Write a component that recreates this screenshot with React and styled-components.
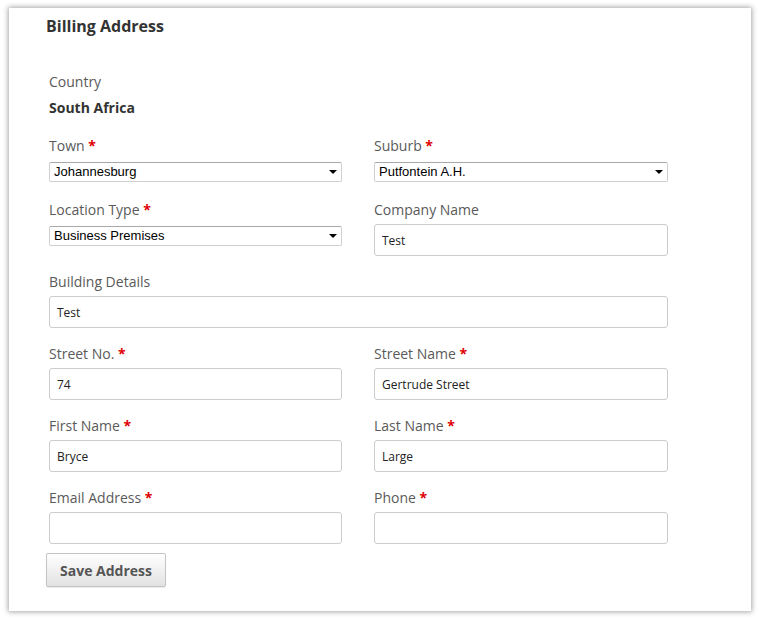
import React from 'react'
import styled, { createGlobalStyle } from 'styled-components'

const GlobalStyle = createGlobalStyle`
  html, body {
    margin: 0;
    padding: 0;
    background: #ffffff;
  }
  body {
    font-family: "Open Sans", "DejaVu Sans", sans-serif;
  }
`

export default function App() {
  return (
    <Page>
      <GlobalStyle />
      <Card>
        <Heading>Billing Address</Heading>
        <Form onSubmit={(e) => e.preventDefault()}>
          <CountryBlock>
            <Label>Country</Label>
            <CountryValue>South Africa</CountryValue>
          </CountryBlock>

          <Row>
            <Field $select>
              <Label>
                Town <Required>*</Required>
              </Label>
              <SelectWrap>
                <Select defaultValue="Johannesburg">
                  <option>Johannesburg</option>
                </Select>
              </SelectWrap>
            </Field>
            <Field $select>
              <Label>
                Suburb <Required>*</Required>
              </Label>
              <SelectWrap>
                <Select defaultValue="Putfontein A.H.">
                  <option>Putfontein A.H.</option>
                </Select>
              </SelectWrap>
            </Field>
          </Row>

          <Row>
            <Field>
              <Label>
                Location Type <Required>*</Required>
              </Label>
              <SelectWrap>
                <Select defaultValue="Business Premises">
                  <option>Business Premises</option>
                </Select>
              </SelectWrap>
            </Field>
            <Field>
              <Label>Company Name</Label>
              <Input type="text" defaultValue="Test" />
            </Field>
          </Row>

          <Field>
            <Label>Building Details</Label>
            <Input type="text" defaultValue="Test" />
          </Field>

          <Row>
            <Field>
              <Label>
                Street No. <Required>*</Required>
              </Label>
              <Input type="text" defaultValue="74" />
            </Field>
            <Field>
              <Label>
                Street Name <Required>*</Required>
              </Label>
              <Input type="text" defaultValue="Gertrude Street" />
            </Field>
          </Row>

          <Row>
            <Field>
              <Label>
                First Name <Required>*</Required>
              </Label>
              <Input type="text" defaultValue="Bryce" />
            </Field>
            <Field>
              <Label>
                Last Name <Required>*</Required>
              </Label>
              <Input type="text" defaultValue="Large" />
            </Field>
          </Row>

          <Row>
            <Field $last>
              <Label>
                Email Address <Required>*</Required>
              </Label>
              <Input type="text" />
            </Field>
            <Field $last>
              <Label>
                Phone <Required>*</Required>
              </Label>
              <Input type="text" />
            </Field>
          </Row>

          <SaveButton type="submit">Save Address</SaveButton>
        </Form>
      </Card>
    </Page>
  )
}

const Page = styled.div`
  padding: 8px 0 0 9px;
  width: 759px;
  height: 619px;
  box-sizing: border-box;
`

const Card = styled.section`
  width: 742px;
  height: 603px;
  box-sizing: border-box;
  background: #ffffff;
  box-shadow: 0 0 5px 1px rgba(0, 0, 0, 0.35);
  padding: 7px 0 0 37px;
`

const Heading = styled.h2`
  margin: 0;
  font-size: 16px;
  line-height: 22px;
  font-weight: 700;
  color: #333333;
`

const Form = styled.form`
  display: flex;
  flex-direction: column;
  width: 619px;
  margin: 35px 0 0 3px;
`

const CountryBlock = styled.div`
  margin-bottom: 18px;
`

const CountryValue = styled.div`
  margin-top: 6px;
  font-size: 14px;
  line-height: 20px;
  font-weight: 700;
  color: #333333;
`

const Row = styled.div`
  display: grid;
  grid-template-columns: 293px 294px;
  column-gap: 32px;
`

const Field = styled.div`
  display: flex;
  flex-direction: column;
  margin-bottom: ${(p) => (p.$select ? '18px' : p.$last ? '9px' : '16px')};
`

const Label = styled.label`
  display: block;
  font-size: 14px;
  line-height: 20px;
  color: #5a5a5a;
  margin-bottom: 4px;
`

const Required = styled.span`
  color: #dd0000;
  font-weight: 700;
`

const SelectWrap = styled.div`
  position: relative;
  margin-top: 2px;
  height: 20px;

  &::after {
    content: '';
    position: absolute;
    right: 5px;
    top: 8px;
    border-left: 4px solid transparent;
    border-right: 4px solid transparent;
    border-top: 4px solid #000000;
    pointer-events: none;
  }
`

const Select = styled.select`
  appearance: none;
  -webkit-appearance: none;
  display: block;
  width: 100%;
  height: 20px;
  box-sizing: border-box;
  margin: 0;
  padding: 0 20px 0 4px;
  border: 1px solid #cfcfcf;
  border-top-color: #a8a8a8;
  border-radius: 2px;
  background: #ffffff;
  font-family: "Liberation Sans", Arial, sans-serif;
  font-size: 13px;
  line-height: 18px;
  color: #000000;
  outline: none;
`

const Input = styled.input`
  display: block;
  width: 100%;
  height: 32px;
  box-sizing: border-box;
  margin: 0;
  padding: 0 7px;
  border: 1px solid #cccccc;
  border-radius: 3px;
  background: #ffffff;
  font-family: "Open Sans", sans-serif;
  font-size: 12px;
  color: #222222;
  outline: none;
`

const SaveButton = styled.button`
  align-self: flex-start;
  width: 120px;
  height: 34px;
  box-sizing: border-box;
  margin: 0 0 0 -3px;
  padding: 0;
  border: 1px solid #c4c4c4;
  border-radius: 2px;
  background: linear-gradient(#ffffff, #e2e2e2);
  box-shadow: 0 1px 1px rgba(0, 0, 0, 0.08);
  font-family: "Open Sans", sans-serif;
  font-size: 14px;
  font-weight: 700;
  color: #555555;
  cursor: pointer;
`
